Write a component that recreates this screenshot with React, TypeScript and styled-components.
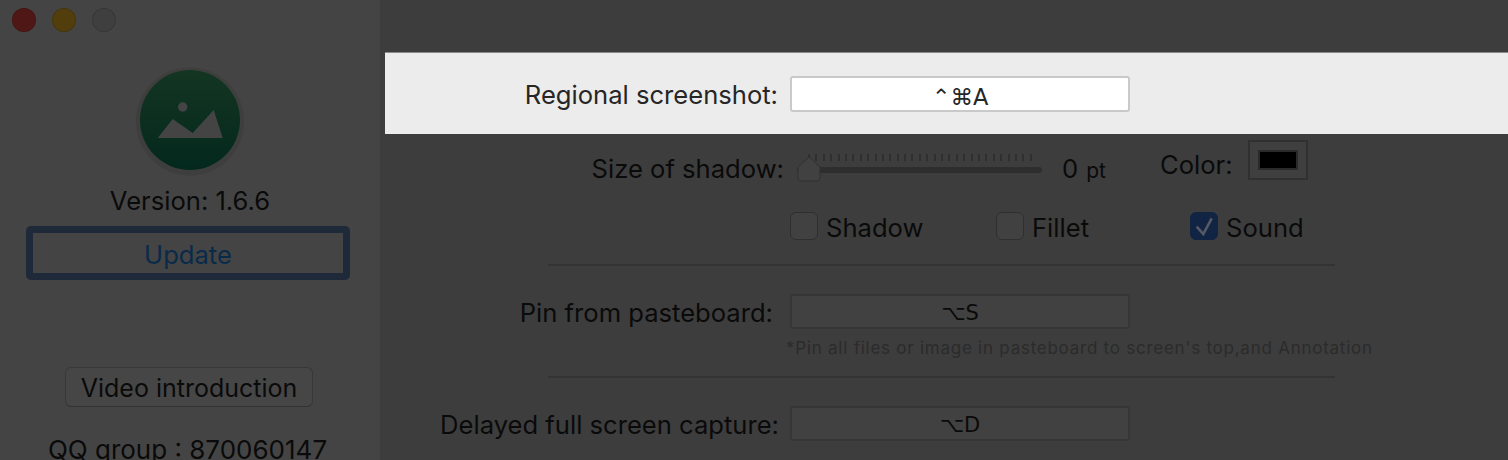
import styled, { createGlobalStyle } from "styled-components";

const GlobalStyle = createGlobalStyle`
  html, body {
    margin: 0;
    padding: 0;
    height: 460px;
    overflow: hidden;
    background: #3d3d3d;
    font-family: Inter, "Liberation Sans", "DejaVu Sans", sans-serif;
  }
  * { box-sizing: border-box; }
`;

const Window = styled.div`
  display: flex;
  width: 1508px;
  height: 460px;
  overflow: hidden;
`;

// SIDEBAR
const Sidebar = styled.aside`
  width: 380px;
  flex-shrink: 0;
  background: #444444;
  display: flex;
  flex-direction: column;
  align-items: center;
  padding: 8px 0 0;
  color: #0a0a0a;
  font-size: 25.6px;

  > * {
    flex-shrink: 0;
  }
`;

const TrafficLights = styled.div`
  align-self: flex-start;
  display: flex;
  gap: 16px;
  padding-left: 12px;
`;

const Light = styled.span<{ $color: string }>`
  width: 24px;
  height: 24px;
  border-radius: 50%;
  background: ${(p) => p.$color};
  box-shadow: inset 0 0 0 1px rgba(0, 0, 0, 0.12);
`;

const AppIcon = styled.svg`
  display: block;
  margin: 33px 0 0 -1px;
`;

const Version = styled.div`
  margin-top: 9px;
  line-height: 30px;
`;

const UpdateButton = styled.div`
  width: 324px;
  height: 54px;
  margin: 10px 0 0 -4px;
  padding-top: 3px;
  border: 7px solid #1e2939;
  border-radius: 5px;
  display: flex;
  align-items: center;
  justify-content: center;
  color: #092a49;
`;

const VideoButton = styled.div`
  width: 248px;
  height: 40px;
  margin: 87px 0 0 -2px;
  padding-top: 1px;
  border: 1px solid #383838;
  border-bottom-color: #333333;
  border-radius: 6px;
  background: #464646;
  display: flex;
  align-items: center;
  justify-content: center;
  white-space: nowrap;
  font-size: 25px;
`;

const QQGroup = styled.div`
  margin: 28px 0 0 -5px;
  line-height: 30px;
  white-space: nowrap;
  font-size: 26px;
`;

// MAIN
const Main = styled.main`
  flex: 1;
  min-width: 0;
  background: #3d3d3d;
  padding-top: 52px;
  color: #0a0a0a;
  font-size: 25.6px;
`;

const Label = styled.div<{ $gap: number; $width?: number; $lift?: boolean }>`
  width: ${(p) => p.$width ?? 410}px;
  padding: 2px ${(p) => p.$gap}px ${(p) => (p.$lift ? 4 : 0)}px 0;
  flex-shrink: 0;
  text-align: right;
  white-space: nowrap;
`;

const Highlight = styled.section`
  margin-left: 5px;
  height: 82px;
  background: #ececec;
  border-top: 1px solid #8a8a8a;
  display: flex;
  align-items: center;
  color: #262626;
`;

const Row = styled.div<{ $height: number; $top?: number }>`
  display: flex;
  align-items: center;
  height: ${(p) => p.$height}px;
  margin-top: ${(p) => p.$top ?? 0}px;
`;

const ShortcutField = styled.div<{ $active?: boolean }>`
  width: 340px;
  height: ${(p) => (p.$active ? 36 : 35)}px;
  padding-top: ${(p) => (p.$active ? 6 : 3)}px;
  border-radius: 3px;
  border: 2px solid ${(p) => (p.$active ? "#c9c9c9" : "#363636")};
  background: ${(p) => (p.$active ? "#ffffff" : "#414141")};
  color: ${(p) => (p.$active ? "#262626" : "#0a0a0a")};
  display: flex;
  align-items: center;
  justify-content: center;
  font-family: "DejaVu Sans", sans-serif;
  font-size: ${(p) => (p.$active ? 22.5 : 21)}px;
`;

const SliderBox = styled.div`
  position: relative;
  width: 245px;
  height: 40px;
  margin: -2px 0 0 7px;
`;

const Ticks = styled.div`
  display: flex;
  justify-content: space-between;
  margin: 6px 10px 0 11px;
`;

const Tick = styled.i`
  width: 2px;
  height: 7px;
  background: #2f2f2f;
`;

const Track = styled.div`
  height: 6px;
  margin-top: 6px;
  border-radius: 3px;
  background: #2e2e2e;
`;

const SliderThumb = styled.svg`
  position: absolute;
  left: 0;
  top: 8px;
`;

const SliderValue = styled.div`
  width: 78px;
  margin: 0 0 2px 20px;
  white-space: nowrap;
`;

const Unit = styled.span`
  font-size: 21px;
  margin-left: 8px;
`;

const ColorLabel = styled.div`
  margin: 0 0 10px 20px;
  width: 88px;
`;

const ColorWell = styled.div`
  width: 60px;
  height: 40px;
  margin-bottom: 18px;
  border: 2px solid #303030;
  background: #3f3f3f;
  display: flex;
  align-items: center;
  justify-content: center;
`;

const ColorSwatch = styled.div`
  width: 40px;
  height: 20px;
  background: #000000;
  border: 2px solid #2a2a2a;
`;

const CheckList = styled.div`
  display: flex;
  margin-left: 410px;
`;

const CheckItem = styled.div<{ $width: number }>`
  display: flex;
  align-items: center;
  gap: 8px;
  width: ${(p) => p.$width}px;
`;

const CheckLabel = styled.span`
  padding-top: 2px;
`;

const CheckBox = styled.span<{ $checked?: boolean }>`
  width: 28px;
  height: 28px;
  border-radius: 6px;
  border: 1px solid ${(p) => (p.$checked ? "#112443" : "#2f2f2f")};
  background: ${(p) => (p.$checked ? "#112443" : "#414141")};
  display: flex;
  align-items: center;
  justify-content: center;
`;

const Divider = styled.hr<{ $top: number }>`
  width: 787px;
  height: 2px;
  margin: ${(p) => p.$top}px 0 0 168px;
  border: none;
  background: #333333;
`;

const Note = styled.div`
  margin: 8px 0 0 406px;
  color: #2b2b2b;
  font-size: 17px;
  line-height: 22px;
  white-space: nowrap;
  letter-spacing: 0.75px;
`;

export default function App() {
  const ticks = Array.from({ length: 31 }, (_, i) => i);

  return (
    <>
      <GlobalStyle />
      <Window>
        <Sidebar>
          <TrafficLights>
            <Light $color="#4f1816" />
            <Light $color="#523d0c" />
            <Light $color="#3f3f3f" />
          </TrafficLights>
          <AppIcon width="110" height="112" viewBox="0 0 110 112">
            <defs>
              <linearGradient id="iconFill" x1="0" y1="0" x2="0" y2="1">
                <stop offset="0" stopColor="#143522" />
                <stop offset="1" stopColor="#03281d" />
              </linearGradient>
            </defs>
            <circle cx="55" cy="56.5" r="54" fill="#3e3e3e" />
            <circle cx="55" cy="55" r="50" fill="url(#iconFill)" />
            <circle cx="47.7" cy="42" r="4.7" fill="#444444" />
            <path d="M22.7 73 L37.7 54 L57.7 68 L78.7 45 L87.7 73 Z" fill="#444444" />
          </AppIcon>
          <Version>Version: 1.6.6</Version>
          <UpdateButton>Update</UpdateButton>
          <VideoButton>Video introduction</VideoButton>
          <QQGroup>QQ group : 870060147</QQGroup>
        </Sidebar>
        <Main>
          <Highlight>
            <Label $gap={12} $width={405}>Regional screenshot:</Label>
            <ShortcutField $active>⌃⌘A</ShortcutField>
          </Highlight>
          <Row $height={56} $top={7}>
            <Label $gap={6} $lift>Size of shadow:</Label>
            <SliderBox>
              <Ticks>
                {ticks.map((t) => (
                  <Tick key={t} />
                ))}
              </Ticks>
              <Track />
              <SliderThumb width="24" height="26" viewBox="0 0 24 26">
                <path
                  d="M12 1 L23 11 V22 a3 3 0 0 1 -3 3 H4 a3 3 0 0 1 -3 -3 V11 Z"
                  fill="#414141"
                  stroke="#303030"
                />
              </SliderThumb>
            </SliderBox>
            <SliderValue>
              0<Unit>pt</Unit>
            </SliderValue>
            <ColorLabel>Color:</ColorLabel>
            <ColorWell>
              <ColorSwatch />
            </ColorWell>
          </Row>
          <Row $height={40} $top={9}>
            <CheckList>
              <CheckItem $width={206}>
                <CheckBox />
                <CheckLabel>Shadow</CheckLabel>
              </CheckItem>
              <CheckItem $width={194}>
                <CheckBox />
                <CheckLabel>Fillet</CheckLabel>
              </CheckItem>
              <CheckItem $width={160}>
                <CheckBox $checked>
                  <svg width="26" height="26" viewBox="0 0 26 26" fill="none">
                    <path d="M5.7 13.7 L12.3 21 L20.7 5.3" stroke="#555a63" strokeWidth="2.6" />
                  </svg>
                </CheckBox>
                <CheckLabel>Sound</CheckLabel>
              </CheckItem>
            </CheckList>
          </Row>
          <Divider $top={18} />
          <Row $height={35} $top={28}>
            <Label $gap={17}>Pin from pasteboard:</Label>
            <ShortcutField>⌥S</ShortcutField>
          </Row>
          <Note>*Pin all files or image in pasteboard to screen's top,and Annotation</Note>
          <Divider $top={17} />
          <Row $height={35} $top={28}>
            <Label $gap={11}>Delayed full screen capture:</Label>
            <ShortcutField>⌥D</ShortcutField>
          </Row>
        </Main>
      </Window>
    </>
  );
}
